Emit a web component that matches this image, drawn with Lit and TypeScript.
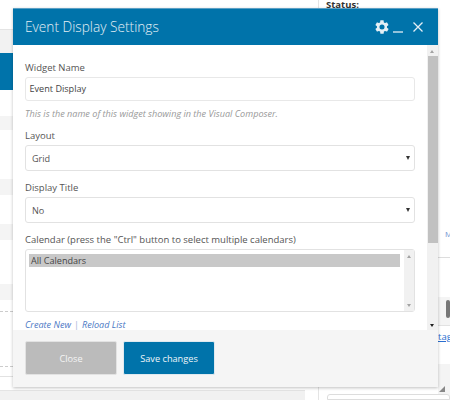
import { LitElement, html, css } from "lit";
import { customElement } from "lit/decorators.js";

@customElement("app-root")
export class AppRoot extends LitElement {
  static styles = css`
    :host { display: block; position: relative; width: 450px; height: 400px; overflow: hidden; background: #fff;
      font-family: "Open Sans", sans-serif; color: #555; }
    * { box-sizing: border-box; }
    .bg { position: absolute; }
    .b1 { left: 0; top: 29px; width: 13px; height: 24px; background: #f2f2f2; border-top: 1px solid #e4e4e4; }
    .b2 { left: 0; top: 53px; width: 13px; height: 37px; background: #0073aa; }
    .b3 { left: 0; top: 116px; width: 13px; height: 14px; background: #f4f4f4; }
    .b4 { left: 0; top: 179px; width: 13px; height: 16px; background: #f4f4f4; }
    .b5 { left: 0; top: 224px; width: 13px; height: 16px; background: #f4f4f4; }
    .b6 { left: 0; top: 284px; width: 13px; height: 16px; background: #f4f4f4; }
    .d1 { left: 0; top: 311px; width: 13px; border-top: 1px dashed #ccc; }
    .d2 { left: 0; top: 366px; width: 13px; border-top: 1px dashed #ccc; }
    .b7 { left: 0; top: 376px; width: 318px; height: 1px; background: #e2e2e2; }
    .b8 { left: 0; top: 390px; width: 305px; height: 10px; background: #f1f1f1; border-top: 1px solid #e4e4e4; }
    .vl { left: 318px; top: 0; width: 1px; height: 400px; background: #e4e4e4; }
    .status { left: 326px; top: -2px; font-size: 9.5px; font-weight: 700; color: #333; line-height: 14px; }
    .m { left: 445px; top: 228px; font-size: 8px; color: #6f8fd0; line-height: 12px; }
    .hr { left: 438px; top: 257px; width: 12px; height: 1px; background: #ddd; }
    .r1 { left: 438px; top: 297px; width: 12px; height: 29px; background: #f4f4f4; border-bottom: 1px solid #e2e2e2; }
    .r2 { left: 446px; top: 300px; width: 4px; height: 18px; background: #777; border-radius: 2px; }
    .tag { left: 438px; top: 331px; font-size: 9.5px; color: #2a6fd0; text-decoration: underline; line-height: 12px; }
    .r3 { left: 438px; top: 364px; width: 12px; height: 36px; background: #f4f4f4; }
    .r4 { left: 327px; top: 394px; width: 123px; height: 6px; background: #fff; border: 1px solid #ddd; border-radius: 3px 3px 0 0; }

    .modal { position: absolute; left: 13px; top: 8px; width: 425px; height: 379px; background: #fff;
      display: flex; flex-direction: column; box-shadow: 0 1px 3px rgba(0,0,0,.25); }
    .head { flex: none; height: 37px; background: #0073aa; color: #e4eff5; border-top: 1px solid #5a9fc4;
      display: flex; align-items: center; padding: 0 14px 0 12px; }
    .title { flex: 1; font-size: 13.7px; font-weight: 300; line-height: 20px; }
    .icons { display: flex; align-items: center; }
    .icons svg { display: block; }
    .min { margin-left: 2px; }
    .x { margin-left: 8px; }
    .mid { flex: 1; min-height: 0; display: flex; }
    .content { flex: 1; min-width: 0; padding: 15px 12px 0 12px; display: flex; flex-direction: column; }
    .content > * { flex: none; }
    label { display: block; font-size: 9.5px; font-weight: 500; color: #555; line-height: 15px; }
    .input { height: 24px; margin-top: 2px; border: 1.5px solid #e8e8e8; border-radius: 3px; padding: 0 3.5px;
      font-size: 9.1px; line-height: 21px; color: #444; }
    .hint { font-size: 9.1px; font-style: italic; color: #999; line-height: 14px; margin-top: 6px; margin-bottom: 7px; }
    .sel { height: 26px; margin-top: 2px; border: 1.5px solid #e2e2e2; border-radius: 3px; padding: 0 4px 0 6px;
      display: flex; align-items: center; justify-content: space-between; font-size: 9.1px; color: #555; margin-bottom: 9px; }
    .caret { width: 0; height: 0; border-left: 2.5px solid transparent; border-right: 2.5px solid transparent; border-top: 4px solid #333; }
    .list { height: 63px; margin-top: 2px; border: 1.5px solid #e2e2e2; border-radius: 3px; display: flex; padding: 4px 0 0 3px; }
    .opt { flex: 1; height: 13px; background: #c8c8c8; color: #444; font-size: 9.1px; line-height: 13px; padding-left: 2px; margin-right: 4.500px; }
    .lsb { width: 10px; margin-top: -4px; background: #f1f1f1; position: relative; }
    .au, .ad { position: absolute; left: 3px; width: 0; height: 0; border-left: 2.5px solid transparent; border-right: 2.5px solid transparent; }
    .lsb .au { top: 5px; border-bottom: 3px solid #a3a3a3; }
    .lsb .ad { bottom: 4px; border-top: 3px solid #a3a3a3; }
    .links { margin-top: 6px; font-size: 9.1px; font-style: italic; color: #4a78c4; line-height: 13px; white-space: nowrap; }
    .links i { font-style: normal; color: #9db4d4; padding: 0 3px; }
    .sb { flex: none; width: 11px; background: #f1f1f1; position: relative; }
    .thumb { position: absolute; left: 1px; right: 0; top: 11px; height: 187px; background: #c1c1c1; }
    .sb .au { top: 5px; left: 3px; border-bottom: 3px solid #a3a3a3; }
    .sb .ad { bottom: 3px; left: 3px; border-top: 3px solid #222; }
    .foot { flex: none; height: 57px; background: #f5f5f5; display: flex; gap: 6px; padding: 11px 12px 0 12px; position: relative; }
    .btn { width: 92px; height: 34px; border-radius: 2px; border: 1px solid #e2e2e2; display: flex; align-items: center; justify-content: center; font-size: 9.2px; color: #fff; }
    .close { background: #bbb; color: #f5f5f5; }
    .save { background: #0073aa; border-color: #dfe9ef; color: #eef5f9; }
    .grip { position: absolute; left: 439px; top: 386px; }
  `;

  render() {
    return html`
      <div class="bg b1"></div><div class="bg b2"></div><div class="bg b3"></div><div class="bg b4"></div>
      <div class="bg b5"></div><div class="bg b6"></div><div class="bg d1"></div><div class="bg d2"></div>
      <div class="bg b7"></div><div class="bg b8"></div><div class="bg vl"></div>
      <div class="bg status">Status:</div><div class="bg m">M</div><div class="bg hr"></div>
      <div class="bg r1"></div><div class="bg r2"></div><div class="bg tag">tag</div>
      <div class="bg r3"></div><div class="bg r4"></div>

      <div class="modal">
        <div class="head">
          <div class="title">Event Display Settings</div>
          <div class="icons">
            <svg width="16" height="16" viewBox="0 0 24 24" fill="#e4eff5">
              <path fill-rule="evenodd" d="M19.400 13c.1-.3.1-.7.1-1s0-.7-.1-1l2.100-1.600c.2-.2.2-.4.1-.6l-2-3.500c-.1-.2-.4-.3-.6-.2l-2.500 1c-.5-.4-1.100-.7-1.700-1L14.400 2.400C14.400 2.200 14.200 2 14 2h-4c-.2 0-.4.200-.5.400L9.100 5.100c-.6.300-1.200.600-1.700 1l-2.500-1c-.2-.100-.5 0-.6.200l-2 3.500c-.1.200-.1.400.1.600L4.500 11c0 .3-.1.700-.1 1s0 .7.100 1l-2.100 1.600c-.2.200-.2.400-.1.600l2 3.500c.1.200.4.300.6.200l2.500-1c.5.400 1.100.700 1.700 1l.4 2.700c.1.200.3.400.5.400h4c.2 0 .4-.2.500-.4l.4-2.700c.6-.3 1.200-.6 1.700-1l2.500 1c.2.100.5 0 .6-.2l2-3.500c.1-.2.100-.4-.1-.6L19.400 13zM12 15.800a3.800 3.800 0 1 1 0-7.600 3.800 3.800 0 0 1 0 7.600z"/>
            </svg>
            <svg class="min" width="12" height="15" viewBox="0 0 12 15"><path d="M1 12h10" stroke="#e4eff5" stroke-width="1.300"/></svg>
            <svg class="x" width="12" height="12" viewBox="0 0 12 12"><path d="M1.500 1.500l9 9M10.500 1.500l-9 9" stroke="#e4eff5" stroke-width="1.300"/></svg>
          </div>
        </div>
        <div class="mid">
          <div class="content">
            <label>Widget Name</label>
            <div class="input">Event Display</div>
            <div class="hint">This is the name of this widget showing in the Visual Composer.</div>
            <label>Layout</label>
            <div class="sel"><span>Grid</span><span class="caret"></span></div>
            <label>Display Title</label>
            <div class="sel"><span>No</span><span class="caret"></span></div>
            <label>Calendar (press the "Ctrl" button to select multiple calendars)</label>
            <div class="list"><div class="opt">All Calendars</div><div class="lsb"><span class="au"></span><span class="ad"></span></div></div>
            <div class="links">Create New<i>|</i>Reload List</div>
          </div>
          <div class="sb"><span class="au"></span><div class="thumb"></div><span class="ad"></span></div>
        </div>
        <div class="foot">
          <div class="btn close">Close</div>
          <div class="btn save">Save changes</div>
        </div>
      </div>
      <svg class="grip" width="8" height="8" viewBox="0 0 8 8"><path d="M6 0v6H0z" fill="#888"/></svg>
    `;
  }
}
